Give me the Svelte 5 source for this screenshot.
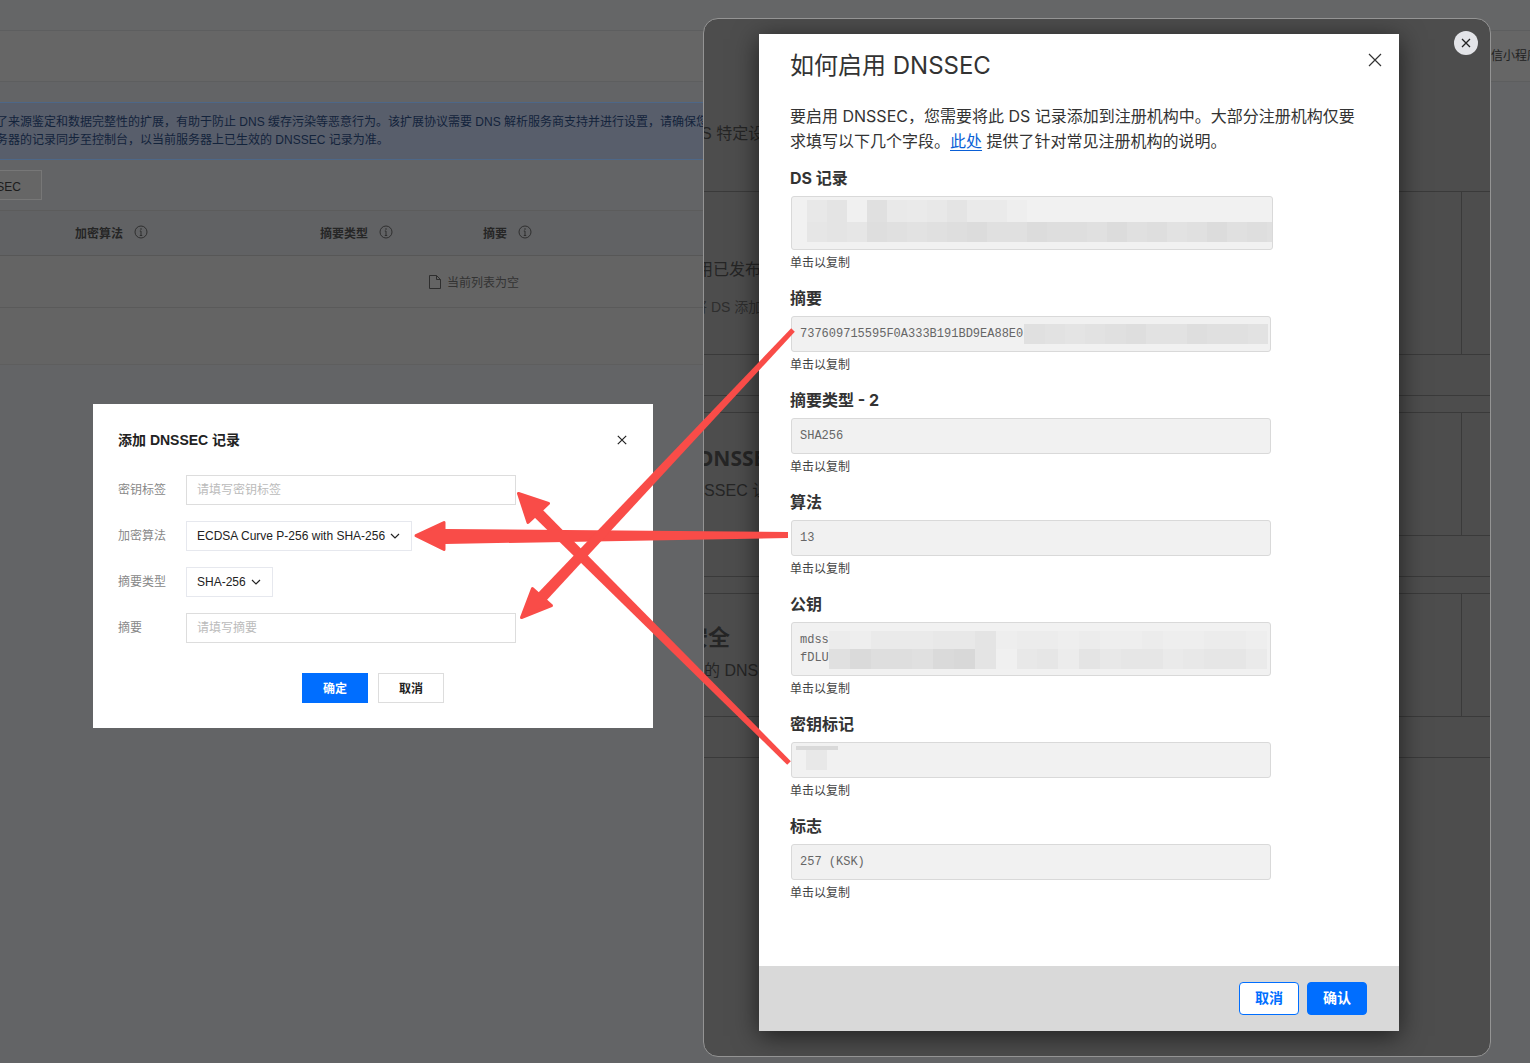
<script>
  const hint = '单击以复制';

  const ds = [
    { w: 20, cells: [232, 228, 240, 224, 233, 234, 232, 228, 234, 234, 238] },
    { w: 20, cells: [230, 228, 230, 222, 224, 226, 224, 222, 220, 224, 224, 220, 222, 222, 224, 220, 224, 222, 226, 224, 220, 224, 222, 224] }
  ];
  const digest = [
    { w: 20.3, cells: [224, 226, 228, 226, 224, 222, 226, 226, 222, 224, 224, 226] }
  ];
  const pubkey = [
    { w: 20.85, cells: [236, 238, 234, 234, 234, 232, 232, 228, 238, 236, 236, 238, 236, 238, 238, 236, 238, 238, 236, 236, 238] },
    { w: 20.85, cells: [224, 218, 222, 222, 224, 218, 216, 228, 240, 232, 230, 236, 228, 232, 230, 230, 234, 232, 230, 230, 234] }
  ];
</script>

{#snippet mosaic(rows)}
  <div class="mosaic">
    {#each rows as row}
      <div class="mrow">
        {#each row.cells as c}
          <i style="width:{row.w}px;background:rgb({c},{c},{c})"></i>
        {/each}
      </div>
    {/each}
  </div>
{/snippet}

{#snippet info()}
  <svg class="info" viewBox="0 0 14 14" width="14" height="14">
    <circle cx="7" cy="7" r="6" fill="none" stroke="#2f2f2f" />
    <path d="M7 6v4.5M5.8 10.5h2.4M5.8 6H7" fill="none" stroke="#2f2f2f" />
    <circle cx="7" cy="4" r=".8" fill="#2f2f2f" />
  </svg>
{/snippet}

<div class="page">
  <div class="bar-top"></div>
  <div class="bar-nav"><span>微信小程序</span></div>

  <div class="content">
    <div class="alert">
      <p>了来源鉴定和数据完整性的扩展，有助于防止 DNS 缓存污染等恶意行为。该扩展协议需要 DNS 解析服务商支持并进行设置，请确保您</p>
      <p>务器的记录同步至控制台，以当前服务器上已生效的 DNSSEC 记录为准。</p>
    </div>

    <button class="add">添加 DNSSEC</button>

    <div class="thead">
      <span class="th th1">加密算法{@render info()}</span>
      <span class="th th2">摘要类型{@render info()}</span>
      <span class="th th3">摘要{@render info()}</span>
    </div>
    <div class="trow">
      <svg viewBox="0 0 12 14" width="12" height="14">
        <path d="M.5.5h7l4 4v9H.5zM7.5.5v4h4" fill="none" stroke="#2e2e2e" />
      </svg>
      <span>当前列表为空</span>
    </div>
    <div class="tfoot"></div>
  </div>

  <!-- console dialog -->
  <div class="dialog">
    <div class="dialog-head">
      <h3>添加 DNSSEC 记录</h3>
      <svg viewBox="0 0 10 10" width="10" height="10">
        <path d="M.8.8l8.4 8.4M9.2.8L.8 9.2" stroke="#222" stroke-width="1.2" />
      </svg>
    </div>
    <div class="form">
      <div class="frow">
        <span class="flabel">密钥标签</span>
        <div class="input">请填写密钥标签</div>
      </div>
      <div class="frow">
        <span class="flabel">加密算法</span>
        <div class="select">
          ECDSA Curve P-256 with SHA-256
          <svg viewBox="0 0 10 6" width="10" height="6"><path d="M1 1l4 4 4-4" fill="none" stroke="#222" stroke-width="1.2" /></svg>
        </div>
      </div>
      <div class="frow">
        <span class="flabel">摘要类型</span>
        <div class="select">
          SHA-256
          <svg viewBox="0 0 10 6" width="10" height="6"><path d="M1 1l4 4 4-4" fill="none" stroke="#222" stroke-width="1.2" /></svg>
        </div>
      </div>
      <div class="frow">
        <span class="flabel">摘要</span>
        <div class="input">请填写摘要</div>
      </div>
    </div>
    <div class="dialog-foot">
      <button class="ok">确定</button>
      <button class="no">取消</button>
    </div>
  </div>

  <!-- screenshot window, dimmed page behind the modal -->
  <div class="window">
    <section class="w-head">
      <p class="w-s">DNS 特定设置</p>
    </section>
    <section class="w-cell">
      <div class="w-main">
        <p class="w-m1">启用已发布</p>
        <p class="w-m2">将 DS 添加</p>
      </div>
    </section>
    <div class="w-gap"></div>
    <div class="w-strip"></div>
    <section class="w-cell short">
      <div class="w-main">
        <h2 class="w-t1">DNSSEC</h2>
        <p class="w-t2">DNSSEC 让</p>
      </div>
    </section>
    <div class="w-gap"></div>
    <div class="w-strip"></div>
    <section class="w-cell short">
      <div class="w-main">
        <h2 class="w-t3">安全</h2>
        <p class="w-t4">您的 DNS</p>
      </div>
    </section>
    <div class="w-gap"></div>

    <div class="round-close">
      <svg viewBox="0 0 10 10" width="10" height="10">
        <path d="M1 1l8 8M9 1L1 9" stroke="#222" stroke-width="1.3" />
      </svg>
    </div>

    <div class="modal">
      <div class="modal-body">
        <div class="modal-head">
          <h1>如何启用 DNSSEC</h1>
          <svg viewBox="0 0 14 14" width="14" height="14">
            <path d="M1 1l12 12M13 1L1 13" stroke="#333" stroke-width="1.2" />
          </svg>
        </div>
        <p class="lead">要启用 DNSSEC，您需要将此 DS 记录添加到注册机构中。大部分注册机构仅要求填写以下几个字段。<a href="#here">此处</a> 提供了针对常见注册机构的说明。</p>

        <div class="field first">
          <h4>DS 记录</h4>
          <div class="box tall ds">{@render mosaic(ds)}</div>
          <small>{hint}</small>
        </div>
        <div class="field">
          <h4>摘要</h4>
          <div class="box"><span>737609715595F0A333B191BD9EA88E0</span>{@render mosaic(digest)}</div>
          <small>{hint}</small>
        </div>
        <div class="field">
          <h4>摘要类型 - 2</h4>
          <div class="box"><span>SHA256</span></div>
          <small>{hint}</small>
        </div>
        <div class="field">
          <h4>算法</h4>
          <div class="box"><span>13</span></div>
          <small>{hint}</small>
        </div>
        <div class="field">
          <h4>公钥</h4>
          <div class="box tall key"><span>mdss<br />fDLU</span>{@render mosaic(pubkey)}</div>
          <small>{hint}</small>
        </div>
        <div class="field">
          <h4>密钥标记</h4>
          <div class="box flag"><div class="flag-a"></div><div class="flag-b"></div></div>
          <small>{hint}</small>
        </div>
        <div class="field">
          <h4>标志</h4>
          <div class="box"><span>257 (KSK)</span></div>
          <small>{hint}</small>
        </div>
      </div>
      <div class="modal-foot">
        <button class="m-no">取消</button>
        <button class="m-ok">确认</button>
      </div>
    </div>
  </div>

  <!-- red annotation arrows drawn over everything -->
  <svg class="arrows" viewBox="0 0 1530 1063" width="1530" height="1063">
    <g fill="#f94c48" stroke="#f94c48" stroke-linejoin="round">
      <polygon stroke-width="0" points="541.9,509.1 790.8,761.2 787.2,764.8 534.1,516.9" />
      <polygon stroke-width="3" points="518.5,493.5 548.5,503.5 528,522.5" />
      <polygon stroke-width="0" points="445,529 788,532 788,538 445,544" />
      <polygon stroke-width="3" points="416,535.7 444,522.5 444,549.5" />
      <polygon stroke-width="0" points="537,594 545,602 794.8,331.7 791.2,328.3" />
      <polygon stroke-width="3" points="521.5,617.5 551.5,605.5 532.5,588.5" />
    </g>
  </svg>
</div>

<style>
  :global(body) { margin: 0; background: #636466; }
  * { box-sizing: border-box; }
  p, h1, h2, h3, h4 { margin: 0; }
  button { font-family: inherit; cursor: pointer; }

  .page {
    position: relative;
    width: 1530px;
    height: 1063px;
    overflow: hidden;
    background: #636466;
    font-family: "Liberation Sans", "Noto Sans CJK SC", sans-serif;
    color: #222;
  }

  .bar-top { height: 31px; border-bottom: 1px solid #5d5e5f; background: #656667; }
  .bar-nav {
    height: 51px;
    padding-left: 1491px;
    background: #666;
    border-bottom: 1px solid #5d5e5f;
    font-size: 12px;
    line-height: 50px;
    white-space: nowrap;
    color: #222;
  }
  .bar-nav span { display: block; margin-left: -12px; }

  .content { width: 720px; }

  .alert {
    margin-top: 20px;
    height: 58px;
    padding-top: 10px;
    background: #585e6b;
    border-top: 1px solid #4d6788;
    border-bottom: 1px solid #4d6788;
    font-size: 12px;
    line-height: 18px;
    color: #13233b;
    white-space: nowrap;
    overflow: hidden;
  }
  .alert p { margin-left: -4px; }

  .add {
    display: block;
    margin: 10px 0 0 -80px;
    width: 122px;
    height: 30px;
    padding: 0 20px 0 0;
    text-align: right;
    background: #666;
    border: 1px solid #777;
    font-size: 12px;
    color: #1c1c1c;
    white-space: nowrap;
  }

  .thead {
    margin-top: 10px;
    height: 46px;
    padding-bottom: 2px;
    display: grid;
    grid-template-columns: 320px 163px 1fr;
    align-items: center;
    background: #616264;
    border-top: 1px solid #5c5c5c;
    border-bottom: 1px solid #575757;
  }
  .th { display: flex; align-items: center; font-size: 12px; font-weight: 700; color: #262626; }
  .th1 { padding-left: 75px; gap: 11px; }
  .th2 { gap: 11px; }
  .th3 { gap: 11px; }
  .info { flex-shrink: 0; }

  .trow {
    height: 52px;
    display: flex;
    align-items: center;
    gap: 6px;
    padding-left: 429px;
    font-size: 12px;
    color: #333;
    background: #646464;
    border-bottom: 1px solid #5a5a5a;
  }
  .tfoot { height: 57px; background: #646464; border-bottom: 1px solid #5e5e5e; }

  .dialog {
    position: absolute;
    left: 93px;
    top: 404px;
    width: 560px;
    height: 324px;
    padding: 0 25px;
    background: #fff;
  }
  .dialog-head {
    height: 71px;
    padding: 0 1px 2px 0;
    display: flex;
    align-items: center;
    justify-content: space-between;
  }
  .dialog-head svg { margin-top: 2px; }
  .dialog-head h3 { font-size: 14px; font-weight: 700; color: #222; }
  .form { display: flex; flex-direction: column; gap: 16px; }
  .frow { display: flex; align-items: center; height: 30px; font-size: 12px; line-height: 28px; }
  .flabel { width: 68px; color: #888; }
  .input {
    width: 330px;
    height: 30px;
    padding-left: 10px;
    border: 1px solid #ddd;
    color: #bbb;
  }
  .select {
    height: 30px;
    padding: 0 11px 0 10px;
    display: flex;
    align-items: center;
    gap: 5px;
    border: 1px solid #e6e8ee;
    color: #222;
  }
  .dialog-foot { margin-top: 30px; display: flex; justify-content: center; gap: 10px; }
  .dialog-foot button { width: 66px; height: 30px; font-size: 12px; padding: 0 0 2px; }
  .ok { background: #006eff; border: 0; color: #fff; font-weight: 700; }
  .no { background: #fff; border: 1px solid #ddd; color: #222; font-weight: 700; }

  .window {
    position: absolute;
    left: 703px;
    top: 18px;
    width: 788px;
    height: 1039px;
    overflow: hidden;
    background: #4d4d4d;
    border: 1px solid #949494;
    border-radius: 15px;
    color: #252525;
  }
  .w-head { height: 173px; padding-top: 103px; border-bottom: 1px solid #3a3a3a; }
  .w-s { font-size: 16px; line-height: 24px; margin-left: -26px; white-space: nowrap; }
  .w-cell { height: 163px; border-bottom: 1px solid #3a3a3a; }
  .w-cell.short { height: 123px; }
  .w-main { width: 758px; height: 100%; border-right: 1px solid #3a3a3a; overflow: hidden; white-space: nowrap; }
  .w-m1 { font-size: 16px; line-height: 24px; margin: 66px 0 0 -23px; }
  .w-m2 { font-size: 14px; line-height: 20px; margin: 15px 0 0 -11px; color: #2e2e2e; }
  .w-t1 { font-family: "Noto Sans", sans-serif; font-size: 21px; line-height: 30px; margin: 30px 0 0 -6px; font-weight: 700; }
  .w-t2 { font-size: 16px; line-height: 24px; margin: 6px 0 0 -23px; }
  .w-t3 { font-size: 22px; line-height: 30px; margin: 29px 0 0 -18px; font-weight: 700; }
  .w-t4 { font-size: 16px; line-height: 24px; margin: 6px 0 0 -16px; }
  .w-gap { height: 41px; border-bottom: 1px solid #3a3a3a; }
  .w-strip { height: 17px; border-bottom: 1px solid #3a3a3a; }

  .round-close {
    position: absolute;
    left: 750px;
    top: 12px;
    width: 24px;
    height: 24px;
    border-radius: 50%;
    background: #e3e4e8;
    display: flex;
    align-items: center;
    justify-content: center;
  }

  .modal {
    position: absolute;
    left: 55px;
    top: 15px;
    width: 640px;
    height: 997px;
    display: flex;
    flex-direction: column;
    background: #fff;
    box-shadow: 0 5px 24px rgba(0, 0, 0, .6);
    font-family: Inter, "Noto Sans CJK SC", sans-serif;
    color: #333;
  }
  .modal-body { flex: 1; padding: 0 31px; }
  .modal-head {
    height: 62px;
    display: flex;
    align-items: center;
    justify-content: space-between;
    margin-right: -14px;
  }
  .modal-head svg { margin-bottom: 10px; }
  .modal-head h1 { font-size: 24px; font-weight: 400; line-height: 62px; padding-top: 1px; }
  .lead { margin-top: 8px; width: 570px; font-size: 16px; line-height: 25px; }
  .lead a { color: #0a5fd6; text-decoration: underline; text-underline-offset: 3px; }

  .field { margin-top: 15px; }
  .field.first { margin-top: 0; padding-top: 12px; }
  .field h4 { font-size: 16px; font-weight: 700; line-height: 24px; color: #333; }
  .box {
    margin: 6px 0 0 1px;
    width: 480px;
    height: 36px;
    padding: 0 2px 0 8px;
    display: flex;
    align-items: center;
    overflow: hidden;
    background: #f1f1f1;
    border: 1px solid #d9d9d9;
    border-radius: 3px;
    font-family: "Liberation Mono", monospace;
    font-size: 12px;
    color: #666;
    white-space: nowrap;
  }
  .box.tall { height: 54px; }
  .box.ds { width: 482px; padding: 3px 0 0 14px; align-items: flex-start; }
  .box.key { line-height: 18px; }
  .box.key span { flex-shrink: 0; width: 28px; }
  .box.flag { display: block; padding: 3px 0 0 4px; }
  .flag-a { width: 42px; height: 4px; background: #d9d9d9; }
  .flag-b { width: 21px; height: 20px; margin-left: 10px; background: #e8e8e8; }
  small { display: block; margin: 5px 0 0 0; font-size: 12px; line-height: 16px; color: #444; }

  .mosaic { display: flex; flex-direction: column; flex-shrink: 0; margin-left: 1px; }
  .mrow { display: flex; height: 20px; }
  .mrow i { display: block; flex-shrink: 0; }
  .ds .mrow:first-child { height: 22px; }
  .key .mrow:first-child { height: 18px; }
  .key .mosaic { margin-top: 1px; }

  .modal-foot {
    height: 65px;
    padding: 16px 32px 0 0;
    display: flex;
    justify-content: flex-end;
    gap: 8px;
    background: #d9d9d9;
  }
  .modal-foot button { width: 60px; height: 33px; border-radius: 4px; font-size: 14px; font-weight: 600; padding: 0 0 3px; border: 1px solid #006eff; }
  .m-no { background: #fff; color: #006eff; }
  .m-ok { background: #006eff; color: #fff; }

  .arrows { position: absolute; left: 0; top: 0; pointer-events: none; }
</style>
